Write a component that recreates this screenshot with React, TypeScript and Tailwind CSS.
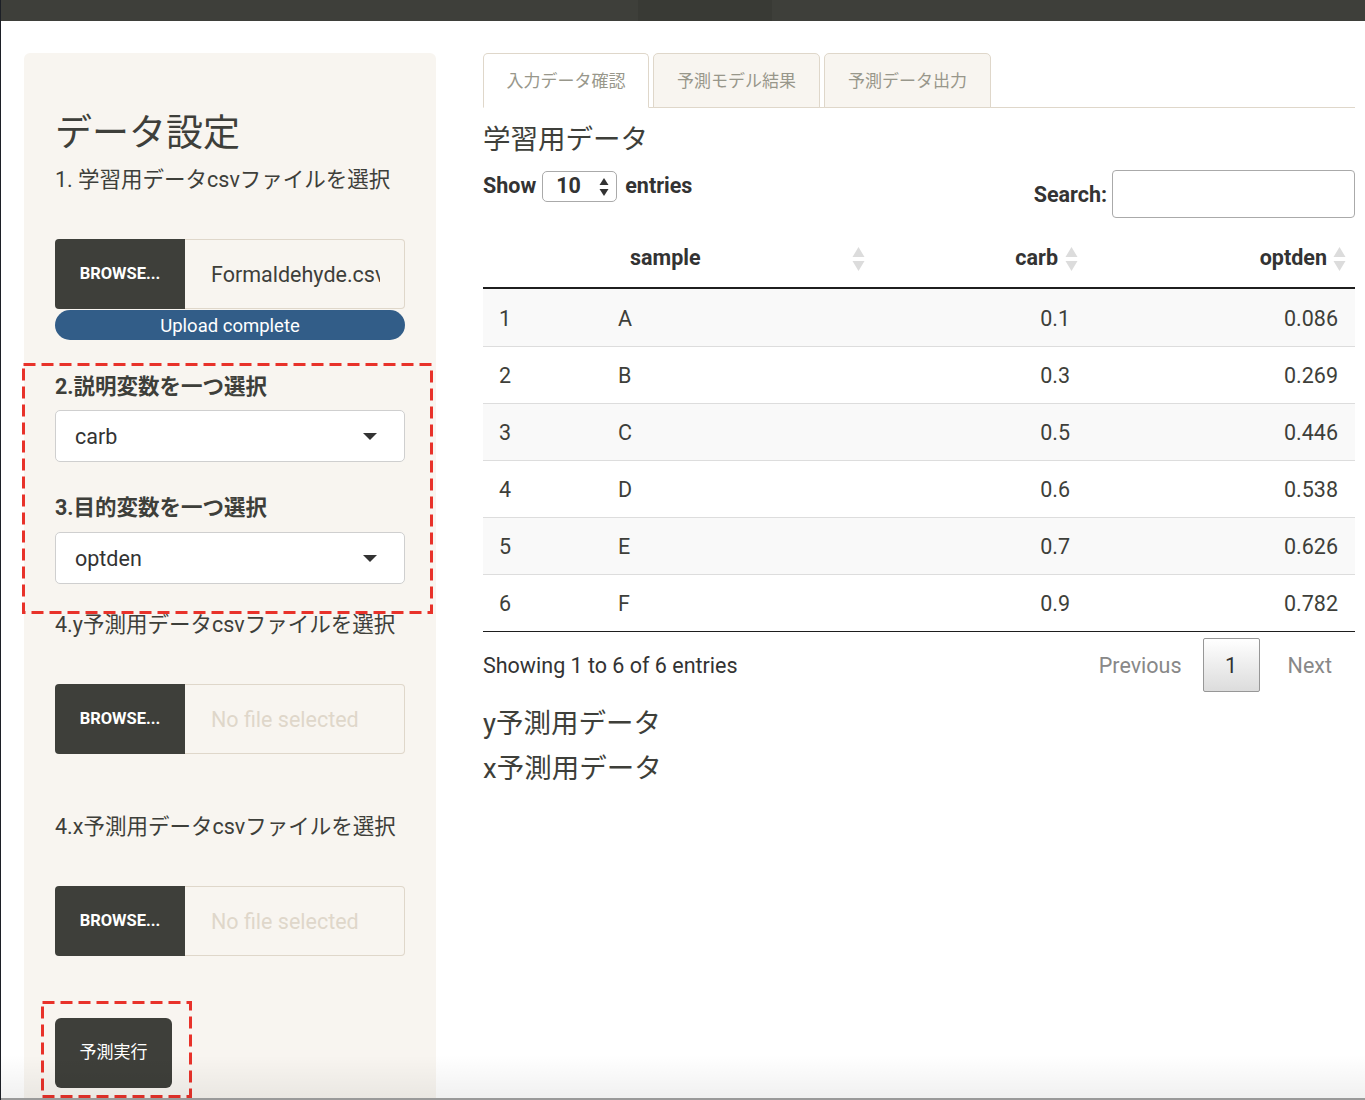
import React from 'react';

const rows = [
  { n: 1, sample: 'A', carb: '0.1', optden: '0.086' },
  { n: 2, sample: 'B', carb: '0.3', optden: '0.269' },
  { n: 3, sample: 'C', carb: '0.5', optden: '0.446' },
  { n: 4, sample: 'D', carb: '0.6', optden: '0.538' },
  { n: 5, sample: 'E', carb: '0.7', optden: '0.626' },
  { n: 6, sample: 'F', carb: '0.9', optden: '0.782' },
];

function SortIcon() {
  return (
    <svg width="13" height="26" viewBox="0 0 13 26" className="absolute top-1/2 -translate-y-1/2">
      <path d="M6.5 1 L12.5 11 L0.5 11 Z" fill="#dcdcdc" />
      <path d="M0.5 15 L12.5 15 L6.5 25 Z" fill="#dcdcdc" />
    </svg>
  );
}

function FileInput({ value, placeholder }: { value?: string; placeholder?: string }) {
  return (
    <div className="flex h-[70px]">
      <div className="flex w-[130px] shrink-0 items-center justify-center rounded-l-[4px] bg-[#3e3f3a] text-[16.5px] font-bold text-white">
        BROWSE...
      </div>
      <div className="flex min-w-0 flex-1 items-center rounded-r-[4px] border border-l-0 border-[#dfd7ca] pl-[26px] pr-[24px] pt-[2px] text-[21.5px]">
        <span className={value ? 'overflow-hidden whitespace-nowrap text-[#3e3f3a]' : 'overflow-hidden whitespace-nowrap text-[#dfd7ca]'}>
          {value ?? placeholder}
        </span>
      </div>
    </div>
  );
}

function Select({ value }: { value: string }) {
  return (
    <div className="flex h-[52px] items-center justify-between rounded-[5px] border border-[#cfcfcf] bg-white pl-[19px] pr-[27px] text-[21.5px] text-[#333]">
      <span className="pt-[2px]">{value}</span>
      <span className="h-0 w-0 border-x-[7.5px] border-t-[7px] border-x-transparent border-t-[#333]" />
    </div>
  );
}

function DashedBox({ className, w, h }: { className: string; w: number; h: number }) {
  return (
    <svg className={className} width={w} height={h} viewBox={`0 0 ${w} ${h}`}>
      <rect x="1.5" y="1.5" width={w - 3} height={h - 3} fill="none" stroke="#e8322a" strokeWidth="3" strokeDasharray="12 6" />
    </svg>
  );
}

export default function App() {
  return (
    <div className="relative h-[1100px] w-[1365px] overflow-hidden border-l border-[#1c1f26] bg-white font-['Roboto','Noto_Sans_CJK_JP',sans-serif] text-[#3e3f3a]">
      {/* top bar */}
      <div className="flex h-[21px]">
        <div className="w-[637px] bg-[#3e3f3a]" />
        <div className="w-[134px] bg-[#393a35]" />
        <div className="flex-1 bg-[#3e3f3a]" />
      </div>

      <div className="flex pl-[23px] pt-[32px]">
        {/* sidebar */}
        <div className="h-[1060px] w-[412px] shrink-0 rounded-t-[6px] bg-[#f8f5f0] px-[31px] pt-[61px]">
          <h2 className="text-[37px] leading-[40px]">データ設定</h2>
          <div className="mt-[11px] text-[21.5px] leading-[30px]">1. 学習用データcsvファイルを選択</div>
          <div className="mt-[44px]">
            <FileInput value="Formaldehyde.csv" />
          </div>
          <div className="mt-px flex h-[30px] items-center justify-center rounded-full bg-[#325d88] pt-[3px] text-[18.5px] text-white">
            Upload complete
          </div>

          <div className="mt-[32px] text-[21.5px] font-bold leading-[30px]">2.説明変数を一つ選択</div>
          <div className="mt-[8px]">
            <Select value="carb" />
          </div>
          <div className="mt-[31px] text-[21.5px] font-bold leading-[30px]">3.目的変数を一つ選択</div>
          <div className="mt-[9px]">
            <Select value="optden" />
          </div>

          <div className="mt-[26px] text-[21.5px] leading-[30px]">4.y予測用データcsvファイルを選択</div>
          <div className="mt-[44px]">
            <FileInput placeholder="No file selected" />
          </div>
          <div className="mt-[58px] text-[21.5px] leading-[30px]">4.x予測用データcsvファイルを選択</div>
          <div className="mt-[44px]">
            <FileInput placeholder="No file selected" />
          </div>

          <button className="mt-[62px] flex h-[70px] w-[117px] items-center justify-center rounded-[6px] bg-[#3e3f3a] text-[17px] text-white">
            予測実行
          </button>
        </div>

        {/* main */}
        <div className="ml-[47px] w-[872px]">
          <div className="flex gap-[4px] border-b border-[#dfd7ca]">
            <div className="-mb-px flex h-[55px] w-[166px] items-center justify-center rounded-t-[5px] border border-[#dfd7ca] border-b-white bg-white pt-[3px] text-[17px] text-[#98978b]">
              入力データ確認
            </div>
            <div className="-mb-px flex h-[55px] w-[167px] items-center justify-center rounded-t-[5px] border border-[#dfd7ca] bg-[#f8f5f0] pt-[3px] text-[17px] text-[#98978b]">
              予測モデル結果
            </div>
            <div className="-mb-px flex h-[55px] w-[167px] items-center justify-center rounded-t-[5px] border border-[#dfd7ca] bg-[#f8f5f0] pt-[3px] text-[17px] text-[#98978b]">
              予測データ出力
            </div>
          </div>

          <h3 className="mt-[15px] text-[27.5px] leading-[34px]">学習用データ</h3>

          <div className="mt-[13px] flex items-start justify-between text-[21.5px] font-bold text-[#333]">
            <div className="flex h-[31px] items-center pt-[2px]">
              <span>Show</span>
              <div className="ml-[6px] flex h-[31px] w-[75px] items-center justify-between rounded-[5px] border border-[#aaa] bg-white pl-[13px] pr-[7px]">
                <span>10</span>
                <svg width="10" height="20" viewBox="0 0 10 20">
                  <path d="M5 1 L9.5 8 L0.5 8 Z" fill="#333" />
                  <path d="M0.5 12 L9.5 12 L5 19 Z" fill="#333" />
                </svg>
              </div>
              <span className="ml-[8px]">entries</span>
            </div>
            <div className="flex items-center">
              <span className="pt-[2px]">Search:</span>
              <div className="ml-[5px] h-[48px] w-[243px] rounded-[4px] border border-[#aaa] bg-white" />
            </div>
          </div>

          {/* table */}
          <div className="mt-[10px] text-[21.5px] text-[#3e3f3a]">
            <div className="grid h-[61px] grid-cols-[119px_268px_215px_270px] items-center border-b-2 border-[#1e1e1e] pt-[2px] font-bold text-[#333]">
              <div />
              <div className="relative flex h-full items-center pl-[28px]">
                sample
                <span className="absolute right-[18px] top-1/2">
                  <SortIcon />
                </span>
              </div>
              <div className="relative flex h-full items-center justify-end pr-[27px]">
                carb
                <span className="absolute right-[20px] top-1/2">
                  <SortIcon />
                </span>
              </div>
              <div className="relative flex h-full items-center justify-end pr-[28px]">
                optden
                <span className="absolute right-[22px] top-1/2">
                  <SortIcon />
                </span>
              </div>
            </div>
            {rows.map((r, i) => (
              <div
                key={r.n}
                className={
                  'grid h-[57px] grid-cols-[119px_268px_215px_270px] items-center pt-[3px] ' +
                  (i === 0 ? 'h-[56px] bg-[#f9f9f9]' : 'border-t border-[#dddddd]') +
                  (i % 2 === 0 && i !== 0 ? ' bg-[#f9f9f9]' : '')
                }
              >
                <div className="pl-[16px]">{r.n}</div>
                <div className="pl-[16px]">{r.sample}</div>
                <div className="pr-[15px] text-right">{r.carb}</div>
                <div className="pr-[17px] text-right">{r.optden}</div>
              </div>
            ))}
            <div className="h-px bg-[#1e1e1e]" />
          </div>

          <div className="mt-[6px] flex h-[54px] items-center justify-between text-[21.5px]">
            <span className="pt-[2px] text-[#333]">Showing 1 to 6 of 6 entries</span>
            <div className="flex items-center">
              <span className="px-[21px] pt-[2px] text-[#888]">Previous</span>
              <span className="flex h-[54px] w-[57px] items-center justify-center rounded-[2px] border border-[#979797] bg-gradient-to-b from-white to-[#dcdcdc] pt-[2px] text-[#333]">
                1
              </span>
              <span className="ml-[7px] pl-[21px] pr-[23px] pt-[2px] text-[#888]">Next</span>
            </div>
          </div>

          <h3 className="mt-[15px] text-[27.5px] leading-[34px]">y予測用データ</h3>
          <h3 className="mt-[11px] text-[27.5px] leading-[34px]">x予測用データ</h3>
        </div>
      </div>

      {/* annotation boxes */}
      <DashedBox className="absolute left-[21px] top-[363px]" w={411} h={251} />
      <DashedBox className="absolute left-[40px] top-[1001px]" w={151} h={97} />

      {/* window bottom shading */}
      <div className="pointer-events-none absolute bottom-0 left-0 h-[45px] w-full bg-gradient-to-b from-transparent to-black/[0.06]" />
      <div className="absolute bottom-0 left-0 h-[2px] w-full bg-[#9a9a9a]" />
    </div>
  );
}
